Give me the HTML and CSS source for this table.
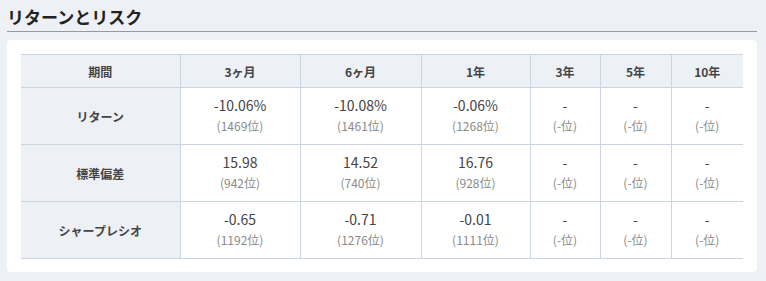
FILE: index.html
```html
<!DOCTYPE html>
<html lang="ja">
<head>
<meta charset="utf-8">
<link rel="stylesheet" href="styles.css">
</head>
<body>
<div class="wrap">
  <h2 class="title">リターンとリスク</h2>
  <div class="card">
    <table class="rr">
      <colgroup>
        <col style="width:159px"><col style="width:120px"><col style="width:121px"><col style="width:109px"><col style="width:70px"><col style="width:71px"><col style="width:72px">
      </colgroup>
      <thead>
        <tr><th>期間</th><th>3ヶ月</th><th>6ヶ月</th><th>1年</th><th>3年</th><th>5年</th><th>10年</th></tr>
      </thead>
      <tbody>
        <tr>
          <th>リターン</th>
          <td><span class="v">-10.06%</span><span class="r">(1469位)</span></td>
          <td><span class="v">-10.08%</span><span class="r">(1461位)</span></td>
          <td><span class="v">-0.06%</span><span class="r">(1268位)</span></td>
          <td><span class="v">-</span><span class="r">(-位)</span></td>
          <td><span class="v">-</span><span class="r">(-位)</span></td>
          <td><span class="v">-</span><span class="r">(-位)</span></td>
        </tr>
        <tr>
          <th>標準偏差</th>
          <td><span class="v">15.98</span><span class="r">(942位)</span></td>
          <td><span class="v">14.52</span><span class="r">(740位)</span></td>
          <td><span class="v">16.76</span><span class="r">(928位)</span></td>
          <td><span class="v">-</span><span class="r">(-位)</span></td>
          <td><span class="v">-</span><span class="r">(-位)</span></td>
          <td><span class="v">-</span><span class="r">(-位)</span></td>
        </tr>
        <tr>
          <th>シャープレシオ</th>
          <td><span class="v">-0.65</span><span class="r">(1192位)</span></td>
          <td><span class="v">-0.71</span><span class="r">(1276位)</span></td>
          <td><span class="v">-0.01</span><span class="r">(1111位)</span></td>
          <td><span class="v">-</span><span class="r">(-位)</span></td>
          <td><span class="v">-</span><span class="r">(-位)</span></td>
          <td><span class="v">-</span><span class="r">(-位)</span></td>
        </tr>
      </tbody>
    </table>
  </div>
</div>
</body>
</html>
```

FILE: styles.css
```css
html, body {
  margin: 0;
  padding: 0;
  background: #edf0f4;
  font-family: "Noto Sans CJK JP", "Noto Sans", sans-serif;
  color: #333;
}
.wrap {
  width: 750px;
  padding: 0 9px 0 7px;
}
.title {
  margin: 0;
  font-size: 17px;
  font-weight: 700;
  line-height: 26px;
  padding-top: 4px;
  padding-bottom: 1px;
  color: #222;
  border-bottom: 1px solid #999;
}
.card {
  margin-top: 8px;
  background: #fff;
  border-radius: 4px;
  padding: 14px 14px 13px;
}
.rr {
  width: 722px;
  border-collapse: collapse;
  table-layout: fixed;
}
.rr th, .rr td {
  border-top: 1px solid #cbd5e2;
  border-bottom: 1px solid #cbd5e2;
  border-left: 1px solid #cbd5e2;
  text-align: center;
  padding: 0;
}
.rr tr > :first-child { border-left: none; }
.rr thead th {
  background: #edf0f5;
  height: 32px;
  font-size: 12px;
  font-weight: 700;
  color: #444;
}
.rr tbody th {
  background: #edf0f5;
  font-size: 12px;
  font-weight: 700;
  color: #444;
}
.rr tbody td { height: 56px; }
.v {
  display: block;
  font-size: 14px;
  line-height: 20px;
  color: #444;
}
.r {
  display: block;
  font-size: 12px;
  line-height: 22px;
  color: #8a8a8a;
}
```
